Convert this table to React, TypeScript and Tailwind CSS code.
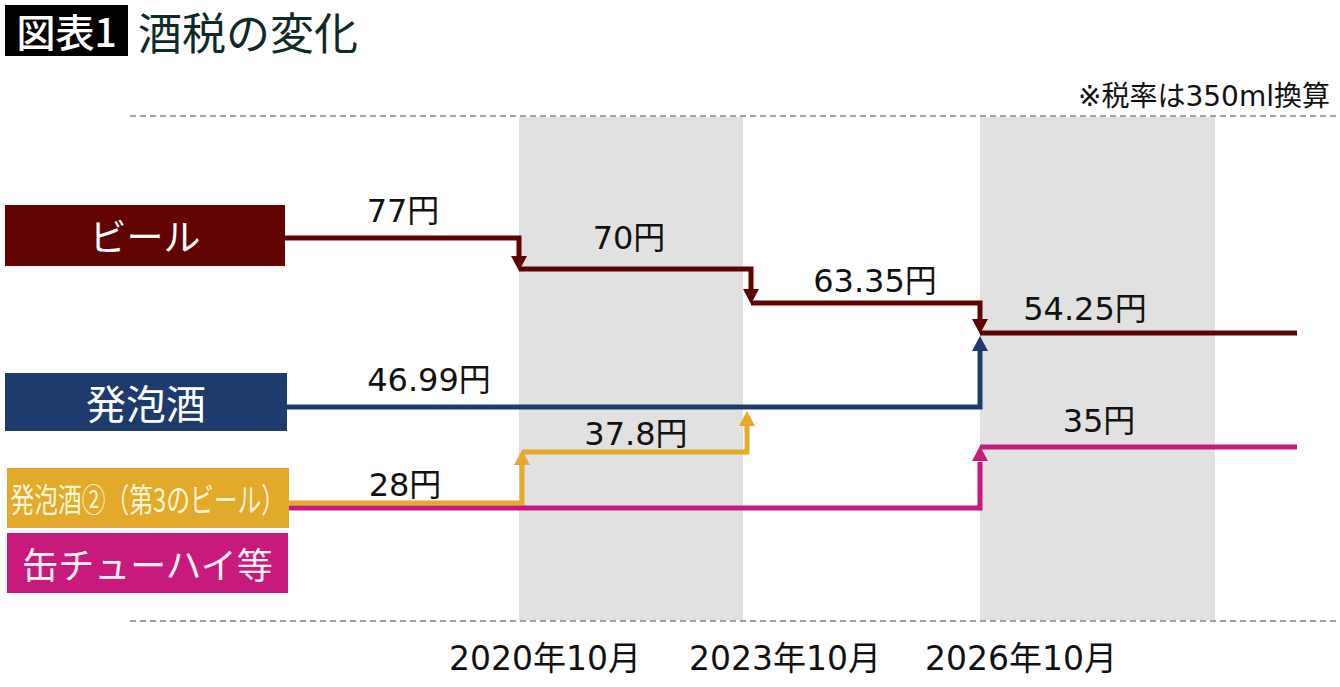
import React from "react";

const NUM_FONT = "'DejaVu Sans', 'Noto Sans CJK JP', sans-serif";

const BEER = "#5f0303";
const BLUE = "#1f3b6d";
const GOLD = "#e4aa2a";
const PINK = "#c8197c";

function Arrow({ x, tip, dir, color }: { x: number; tip: number; dir: "down" | "up"; color: string }) {
  const base = dir === "down" ? tip - 15 : tip + 15;
  return <polygon points={`${x - 8},${base} ${x + 8},${base} ${x},${tip}`} fill={color} />;
}

function Label({ x, y, children, size = 32 }: { x: number; y: number; children: React.ReactNode; size?: number }) {
  return (
    <text x={x} y={y} textAnchor="middle" fontFamily={NUM_FONT} fontSize={size} fill="#111111">
      {children}
    </text>
  );
}

function Chart() {
  return (
    <svg className="absolute inset-0" width={1340} height={687} viewBox="0 0 1340 687">
      {/* shaded periods */}
      <rect x={519} y={117} width={224} height={503} fill="#e1e1e1" />
      <rect x={980} y={117} width={235} height={503} fill="#e1e1e1" />
      {/* dashed frame lines */}
      <line x1={130} y1={116} x2={1340} y2={116} stroke="#a3a3a3" strokeWidth={2} strokeDasharray="6 4" />
      <line x1={130} y1={621} x2={1340} y2={621} stroke="#a3a3a3" strokeWidth={2} strokeDasharray="6 4" />

      {/* beer */}
      <g fill="none" stroke={BEER} strokeWidth={5}>
        <path d="M285,238 H519 V257" />
        <path d="M519,269 H751 V290" />
        <path d="M751,303 H980 V320" />
        <path d="M980,333 H1297" />
      </g>
      <Arrow x={519} tip={271} dir="down" color={BEER} />
      <Arrow x={751} tip={304} dir="down" color={BEER} />
      <Arrow x={980} tip={334} dir="down" color={BEER} />

      {/* happoshu */}
      <path d="M287,407 H980 V350" fill="none" stroke={BLUE} strokeWidth={5} />
      <Arrow x={980} tip={336} dir="up" color={BLUE} />

      {/* third beer */}
      <g fill="none" stroke={GOLD} strokeWidth={5}>
        <path d="M289,503 H522 V465" />
        <path d="M522,452 H747 V424" />
      </g>
      <Arrow x={522} tip={450} dir="up" color={GOLD} />
      <Arrow x={747} tip={411} dir="up" color={GOLD} />

      {/* chuhai */}
      <g fill="none" stroke={PINK} strokeWidth={5}>
        <path d="M288,508 H980 V462" />
        <path d="M980,447 H1297" />
      </g>
      <Arrow x={980} tip={446} dir="up" color={PINK} />

      {/* values */}
      <Label x={403} y={222}>77円</Label>
      <Label x={629} y={249}>70円</Label>
      <Label x={875} y={292}>63.35円</Label>
      <Label x={1085} y={320}>54.25円</Label>
      <Label x={429} y={391}>46.99円</Label>
      <Label x={636} y={445}>37.8円</Label>
      <Label x={405} y={496}>28円</Label>
      <Label x={1099} y={432}>35円</Label>

      {/* note */}
      <text x={1330} y={106} textAnchor="end" fontFamily={NUM_FONT} fontSize={28} fill="#111111">
        ※税率は350ml換算
      </text>

      {/* dates */}
      <Label x={545} y={670} size={33}>2020年10月</Label>
      <Label x={785} y={670} size={33}>2023年10月</Label>
      <Label x={1021} y={670} size={33}>2026年10月</Label>
    </svg>
  );
}

export default function App() {
  return (
    <div className="relative w-[1340px] h-[687px] bg-white overflow-hidden font-['Noto_Sans_CJK_JP',sans-serif]">
      <Chart />
      <div className="relative flex flex-col">
        <header className="flex items-center pl-[5px] pt-[5px] gap-[10px]">
          <div className="w-[123px] h-[51px] bg-black text-white flex items-center justify-center text-[39px] font-medium leading-none">
            図表1
          </div>
          <h1 className="text-[44px] leading-none text-[#0f2a26] font-normal">酒税の変化</h1>
        </header>

        <div className="flex flex-col mt-[149px]">
          <div className="ml-[5px] w-[280px] h-[61px] bg-[#620404] text-white text-[37px] leading-none flex items-center justify-center">
            ビール
          </div>
          <div className="ml-[5px] mt-[107px] w-[282px] h-[58px] bg-[#1f3b6d] text-white text-[40px] leading-none flex items-center justify-center">
            発泡酒
          </div>
          <div className="ml-[7px] mt-[37px] w-[282px] h-[60px] bg-[#e2a92a] text-[#fdf5d6] flex items-center justify-center overflow-hidden">
            <span className="text-[33px] leading-none whitespace-nowrap scale-x-[0.72] inline-block">発泡酒②（第3のビール）</span>
          </div>
          <div className="ml-[7px] mt-[5px] w-[281px] h-[60px] bg-[#c8197c] text-[#fff0f8] text-[36px] leading-none flex items-center justify-center">
            缶チューハイ等
          </div>
        </div>
      </div>
    </div>
  );
}
